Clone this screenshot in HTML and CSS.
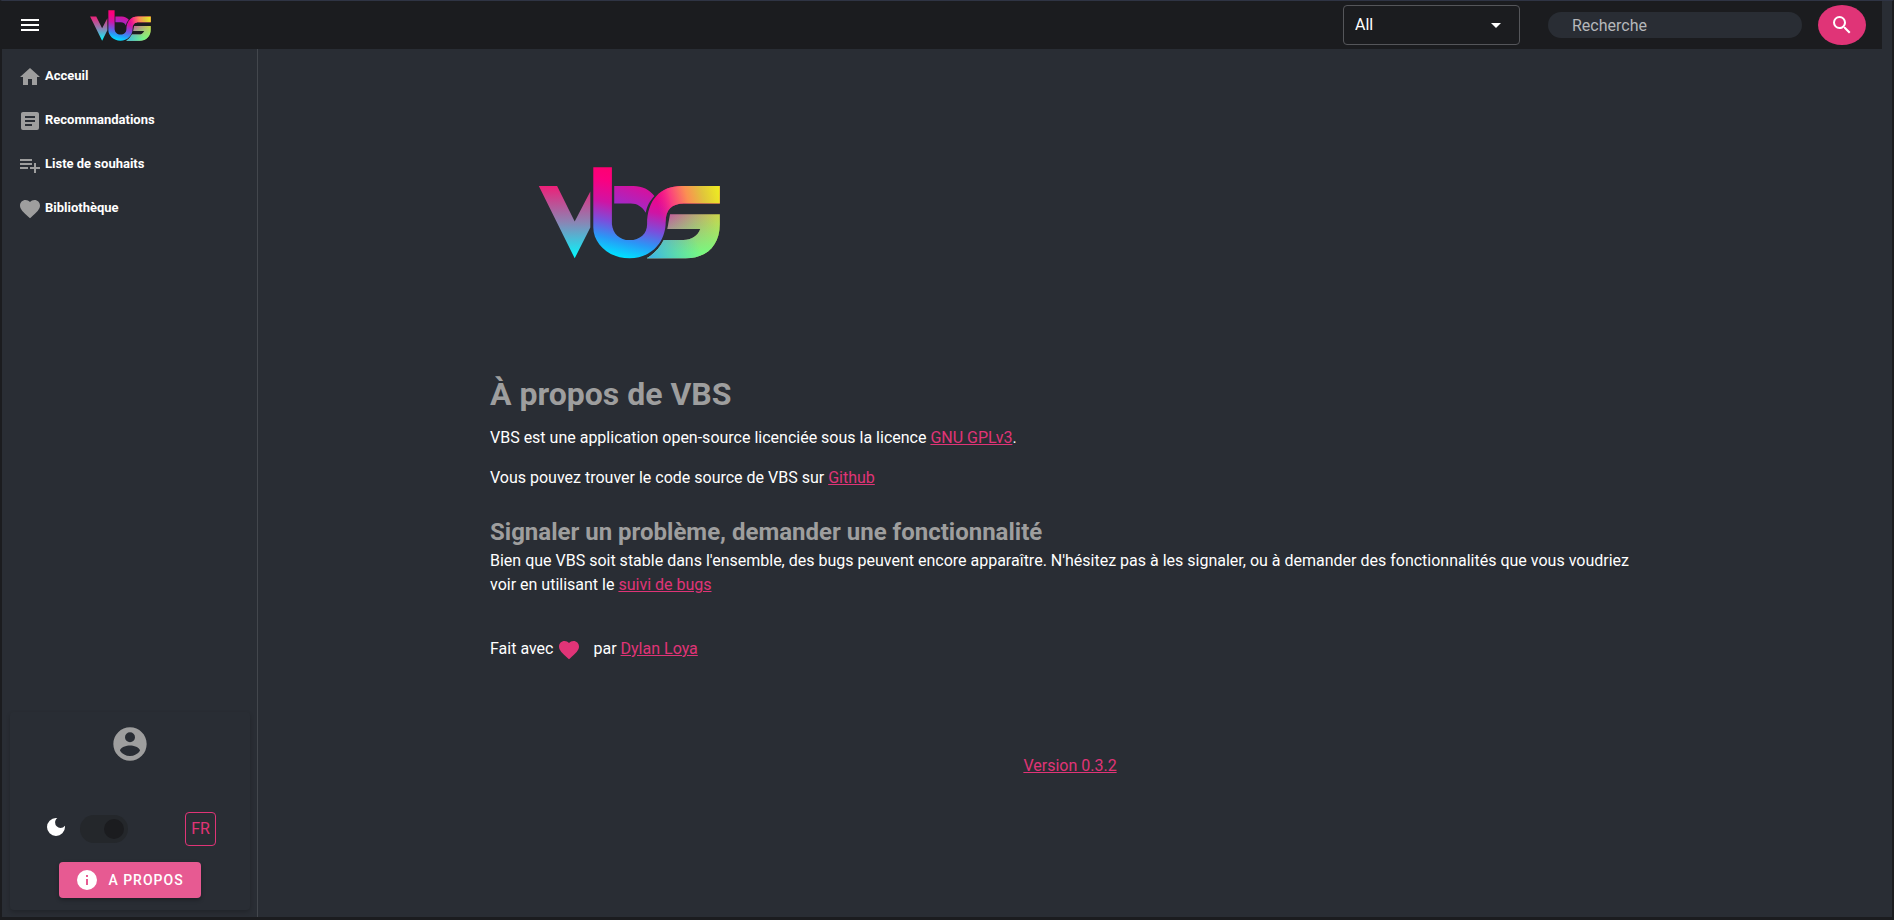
FILE: index.html
```html
<!DOCTYPE html>
<html lang="fr">
<head>
<meta charset="utf-8">
<title>VBS - À propos</title>
<link rel="stylesheet" href="styles.css">
</head>
<body>
<svg class="defs" aria-hidden="true">
  <defs>
    <linearGradient id="g-v" x1="0" y1="107" x2="0" y2="325" gradientUnits="userSpaceOnUse">
      <stop offset="0" stop-color="#ee1f78"/><stop offset=".5" stop-color="#8b84b4"/><stop offset="1" stop-color="#00fbff"/>
    </linearGradient>
    <linearGradient id="g-b" x1="280" y1="51" x2="220" y2="325" gradientUnits="userSpaceOnUse">
      <stop offset="0" stop-color="#ff0070"/><stop offset=".15" stop-color="#fb0080"/><stop offset=".38" stop-color="#cf14a4"/><stop offset=".58" stop-color="#7a4fdc"/><stop offset=".75" stop-color="#2a97f6"/><stop offset=".92" stop-color="#00e0ff"/>
    </linearGradient>
    <linearGradient id="g-tail" x1="412" y1="165" x2="600" y2="115" gradientUnits="userSpaceOnUse">
      <stop offset="0" stop-color="#e8209a" stop-opacity="0"/><stop offset=".22" stop-color="#fa3c80"/><stop offset=".48" stop-color="#fb9052"/><stop offset=".72" stop-color="#e0c43c"/><stop offset="1" stop-color="#eeee20"/>
    </linearGradient>
    <linearGradient id="g-cap" x1="350" y1="105" x2="325" y2="180" gradientUnits="userSpaceOnUse">
      <stop offset="0" stop-color="#d8109c"/><stop offset="1" stop-color="#9c2ccc"/>
    </linearGradient>
    <linearGradient id="g-s" x1="442" y1="0" x2="600" y2="0" gradientUnits="userSpaceOnUse">
      <stop offset="0" stop-color="#c4589e"/><stop offset=".5" stop-color="#b8a478"/><stop offset="1" stop-color="#ccd848"/>
    </linearGradient>
    <linearGradient id="g-green" x1="0" y1="192" x2="0" y2="310" gradientUnits="userSpaceOnUse">
      <stop offset="0" stop-color="#78f880" stop-opacity="0"/><stop offset="1" stop-color="#78f880"/>
    </linearGradient>
    <linearGradient id="g-cyan" x1="400" y1="325" x2="530" y2="270" gradientUnits="userSpaceOnUse">
      <stop offset="0" stop-color="#40b8e0"/><stop offset="1" stop-color="#40c8d0" stop-opacity="0"/>
    </linearGradient>
    <symbol id="logo" viewBox="54 50 548 277">
      <path fill="url(#g-v)" d="M55 107H110L163 214L210 124V232L163 325Z"/>
      <path fill="url(#g-cap)" d="M282 107H340C366 107 388 118 403 137C390 151 380 167 377 188C367 170 351 160 332 160H282Z"/>
      <path fill="url(#g-b)" d="M219 51H275V222C278 250 298 270 328 270C360 270 381 250 381 222C381 150 420 107 485 107H600V160H492C456 160 437 178 437 215C437 280 390 325 328 325C265 325 219 280 219 232Z"/>
      <path fill="url(#g-tail)" d="M381 215C383 150 420 107 485 107H600V160H492C456 160 437 178 437 215Z"/>
      <path fill="url(#g-s)" d="M450 192H600V222C600 285 560 325 497 325H380C402 312 420 293 431 270H490C515 270 533 258 541 237H442Z"/>
      <path fill="url(#g-green)" d="M450 192H600V222C600 285 560 325 497 325H380C402 312 420 293 431 270H490C515 270 533 258 541 237H442Z"/>
      <path fill="url(#g-cyan)" d="M497 325H380C402 312 420 293 431 270H490C515 270 533 258 541 237L600 240C595 290 560 325 497 325Z"/>
    </symbol>
  </defs>
</svg>
<div class="app">
  <header class="topbar">
    <button class="icon-btn" type="button" aria-label="Menu"><svg class="icon" viewBox="0 0 24 24"><path d="M3,6H21V8H3V6M3,11H21V13H3V11M3,16H21V18H3V16Z"/></svg></button>
    <a class="brand" href="#" aria-label="VBS"><svg class="brand-logo"><use href="#logo"/></svg></a>
    <form class="search">
      <span class="select-wrap">
        <select class="filter" aria-label="Type"><option>All</option></select>
        <svg class="icon caret" viewBox="0 0 24 24"><path d="M7,10L12,15L17,10H7Z"/></svg>
      </span>
      <input class="query" type="text" placeholder="Recherche" aria-label="Recherche">
      <button class="go" type="submit" aria-label="Rechercher"><svg class="icon" viewBox="0 0 24 24"><path d="M9.5,3A6.5,6.5 0 0,1 16,9.5C16,11.11 15.41,12.59 14.44,13.73L14.71,14H15.5L20.5,19L19,20.5L14,15.5V14.71L13.73,14.44C12.59,15.41 11.11,16 9.5,16A6.5,6.5 0 0,1 3,9.5A6.5,6.5 0 0,1 9.5,3M9.5,5C7,5 5,7 5,9.5C5,12 7,14 9.5,14C12,14 14,12 14,9.5C14,7 12,5 9.5,5Z"/></svg></button>
    </form>
  </header>
  <div class="body">
    <aside class="sidebar">
      <nav class="nav">
        <a class="nav-link" href="#"><svg class="icon muted" viewBox="0 0 24 24"><path d="M10,20V14H14V20H19V12H22L12,3L2,12H5V20H10Z"/></svg><span>Acceuil</span></a>
        <a class="nav-link" href="#"><svg class="icon muted" viewBox="0 0 24 24"><path d="M14,17H7V15H14M17,13H7V11H17M17,9H7V7H17M19,3H5C3.89,3 3,3.89 3,5V19A2,2 0 0,0 5,21H19A2,2 0 0,0 21,19V5C21,3.89 20.1,3 19,3Z"/></svg><span>Recommandations</span></a>
        <a class="nav-link" href="#"><svg class="icon muted" viewBox="0 0 24 24"><path d="M2,16H10V14H2M18,14V10H16V14H12V16H16V20H18V16H22V14M14,6H2V8H14M14,10H2V12H14V10Z"/></svg><span>Liste de souhaits</span></a>
        <a class="nav-link" href="#"><svg class="icon muted" viewBox="0 0 24 24"><path d="M12,21.35L10.55,20.03C5.4,15.36 2,12.27 2,8.5C2,5.41 4.42,3 7.5,3C9.24,3 10.91,3.81 12,5.08C13.09,3.81 14.76,3 16.5,3C19.58,3 22,5.41 22,8.5C22,12.27 18.6,15.36 13.45,20.03L12,21.35Z"/></svg><span>Bibliothèque</span></a>
      </nav>
      <section class="card">
        <svg class="avatar muted" viewBox="0 0 24 24"><path d="M12,19.2C9.5,19.2 7.29,17.92 6,16C6.03,14 10,12.9 12,12.9C14,12.9 17.97,14 18,16C16.71,17.92 14.5,19.2 12,19.2M12,5A3,3 0 0,1 15,8A3,3 0 0,1 12,11A3,3 0 0,1 9,8A3,3 0 0,1 12,5M12,2A10,10 0 0,0 2,12A10,10 0 0,0 12,22A10,10 0 0,0 22,12C22,6.47 17.5,2 12,2Z"/></svg>
        <div class="prefs">
          <label class="theme">
            <svg class="icon moon" viewBox="0 0 24 24"><path d="M12 3a9 9 0 1 0 9 9c0-.46-.04-.92-.1-1.36a5.39 5.39 0 0 1-4.4 2.26a5.4 5.4 0 0 1-5.4-5.4c0-1.81.89-3.42 2.26-4.4C12.92 3.04 12.46 3 12 3z" /></svg>
            <input class="switch" type="checkbox" checked aria-label="Mode sombre">
          </label>
          <button class="lang" type="button">FR</button>
        </div>
        <button class="about" type="button"><svg class="icon" viewBox="0 0 24 24"><path d="M13,9H11V7H13M13,17H11V11H13M12,2A10,10 0 0,0 2,12A10,10 0 0,0 12,22A10,10 0 0,0 22,12A10,10 0 0,0 12,2Z"/></svg><span>A PROPOS</span></button>
      </section>
    </aside>
    <main class="content">
      <article class="page">
        <svg class="hero-logo" role="img" aria-label="VBS"><use href="#logo"/></svg>
        <h1>À propos de VBS</h1>
        <p>VBS est une application open-source licenciée sous la licence <a href="#">GNU GPLv3</a>.</p>
        <p>Vous pouvez trouver le code source de VBS sur <a href="#">Github</a></p>
        <h2>Signaler un problème, demander une fonctionnalité</h2>
        <p>Bien que VBS soit stable dans l'ensemble, des bugs peuvent encore apparaître. N'hésitez pas à les signaler, ou à demander des fonctionnalités que vous voudriez voir en utilisant le <a href="#">suivi de bugs</a></p>
        <p class="credit"><span>Fait avec</span><svg class="icon love" viewBox="0 0 24 24"><path d="M12,21.35L10.55,20.03C5.4,15.36 2,12.27 2,8.5C2,5.41 4.42,3 7.5,3C9.24,3 10.91,3.81 12,5.08C13.09,3.81 14.76,3 16.5,3C19.58,3 22,5.41 22,8.5C22,12.27 18.6,15.36 13.45,20.03L12,21.35Z"/></svg><span>par <a href="#">Dylan Loya</a></span></p>
        <p class="version"><a href="#">Version 0.3.2</a></p>
      </article>
    </main>
  </div>
</div>
</body>
</html>
```
FILE: styles.css
```css
:root {
  --bg: #292d34;
  --bar: #1b1c1f;
  --pink: #e03477;
  --muted: #9e9e9e;
}

* { box-sizing: border-box; }

body {
  margin: 0;
  background: var(--bg);
  color: #fff;
  font: 16px/24px Roboto, sans-serif;
}

.defs { position: absolute; width: 0; height: 0; }

.app {
  display: flex;
  flex-direction: column;
  min-height: 100vh;
  border: solid var(--bar);
  border-width: 1px 2px 3px;
  border-top-color: #2f3444;
}

button, input, select { font: inherit; color: inherit; margin: 0; }
button { padding: 0; border: 0; background: none; cursor: pointer; }
a { color: var(--pink); }

.icon { display: block; flex: none; width: 24px; height: 24px; fill: currentColor; }
.muted { color: var(--muted); fill: currentColor; }

/* top bar */
.topbar {
  display: flex;
  align-items: center;
  height: 48px;
  margin-right: 10px;
  padding: 0 16px;
  background: var(--bar);
}
.brand { margin-left: 48px; padding-top: 1px; }
.brand-logo { display: block; width: 61px; height: 31px; }
.search { display: flex; align-items: center; margin-left: auto; }
.select-wrap { display: grid; align-items: center; margin-right: 28px; }
.select-wrap > * { grid-area: 1 / 1; }
.filter {
  width: 177px;
  height: 40px;
  padding: 0 11px;
  appearance: none;
  background: transparent;
  border: 1px solid #55565a;
  border-radius: 4px;
}
.caret { justify-self: end; margin-right: 12px; pointer-events: none; }
.query {
  width: 254px;
  height: 26px;
  margin-right: 16px;
  padding: 0 24px;
  background: var(--bg);
  border: 0;
  border-radius: 13px;
}
.query::placeholder { color: #b5b7ba; opacity: 1; }
.go {
  display: grid;
  place-items: center;
  width: 48px;
  height: 40px;
  border-radius: 50%;
  background: var(--pink);
}

/* layout */
.body { display: flex; flex: 1; }
.sidebar {
  display: flex;
  flex-direction: column;
  justify-content: space-between;
  width: 256px;
  padding: 16px 7px 7px 8px;
  border-right: 1px solid #43474d;
}
.nav { display: grid; gap: 20px; padding: 0 8px; }
.nav-link {
  display: flex;
  gap: 3px;
  color: #fff;
  font-size: 13px;
  font-weight: 700;
  line-height: 22px;
  text-decoration: none;
}

.card {
  display: flex;
  flex-direction: column;
  align-items: center;
  padding: 12px 0;
  border-radius: 4px;
  box-shadow: 0 2px 4px rgba(0, 0, 0, .2);
}
.avatar { width: 40px; height: 40px; }
.prefs {
  display: flex;
  align-items: center;
  justify-content: space-between;
  align-self: stretch;
  margin: 48px 34px 16px;
}
.theme { display: flex; gap: 12px; }
.switch {
  display: grid;
  align-items: center;
  justify-items: end;
  width: 48px;
  height: 28px;
  margin: 0;
  padding: 0 4px;
  appearance: none;
  border-radius: 14px;
  background: #24272b;
}
.switch::after {
  content: "";
  width: 20px;
  height: 20px;
  border-radius: 50%;
  background: var(--bar);
}
.lang {
  width: 31px;
  height: 34px;
  border: 1px solid var(--pink);
  border-radius: 4px;
  color: var(--pink);
}
.about {
  display: flex;
  align-items: center;
  gap: 9px;
  height: 36px;
  padding: 0 17px 0 16px;
  border-radius: 4px;
  background: #e75a92;
  box-shadow: 0 2px 4px rgba(0, 0, 0, .3);
  font-size: 14px;
  font-weight: 500;
  letter-spacing: 1px;
}

/* page */
.content {
  display: grid;
  grid-template-columns: 1fr 5fr 1fr;
  flex: 1;
  margin-right: 10px;
}
.page { grid-column: 2; padding-top: 118px; }
.hero-logo { display: block; width: 183px; height: 92px; margin-left: 48px; }
h1, h2 { margin: 0; color: var(--muted); }
h1 { margin-top: 111px; font-size: 32px; line-height: 48px; }
h2 { margin-top: 26px; font-size: 24px; line-height: 32px; }
p { margin: 0; }
h1 + p { margin: 8px 0 16px; }
h2 + p { margin-top: 1px; }
.credit { display: flex; margin-top: 40px; }
.love { margin: 1px 12px 0 4px; color: var(--pink); }
.version { margin-top: 92px; text-align: center; }
```
